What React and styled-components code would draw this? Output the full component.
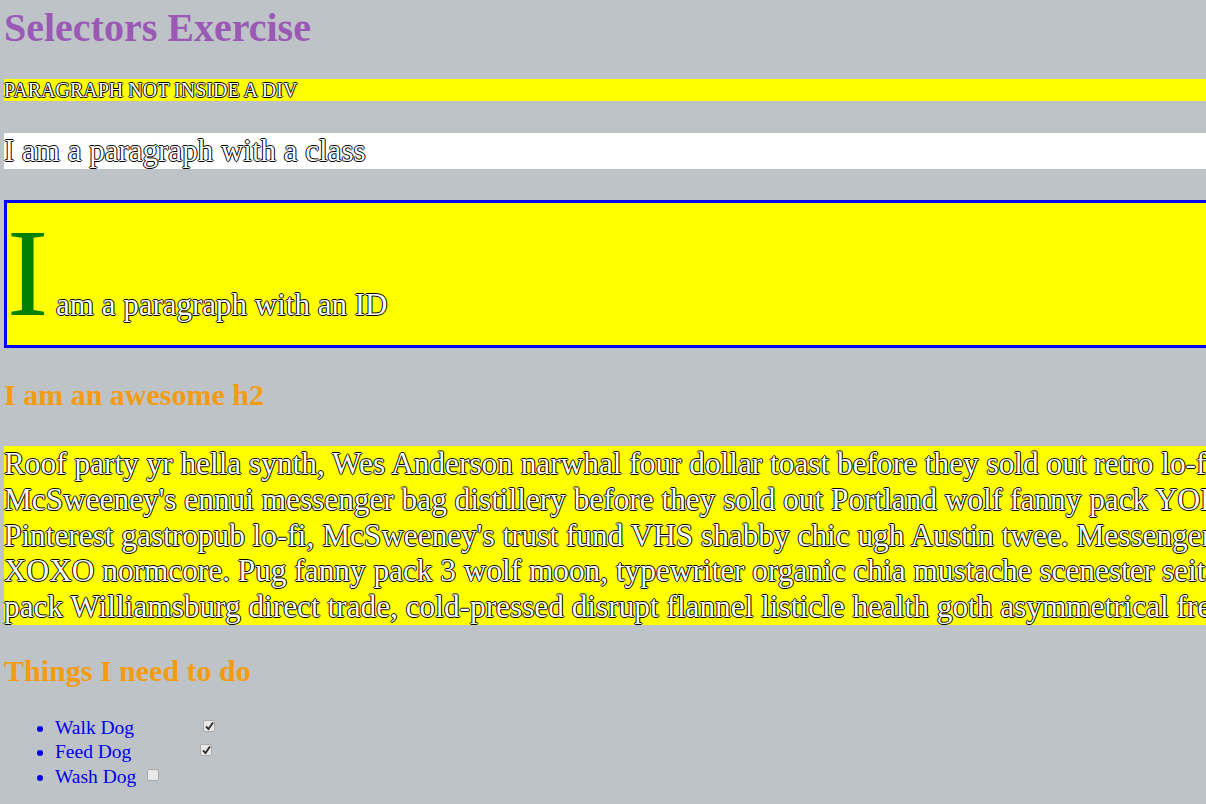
import React from 'react';
import styled, { createGlobalStyle } from 'styled-components';

const GlobalStyle = createGlobalStyle`
  html, body {
    margin: 0;
    padding: 0;
    overflow: hidden;
    background: #bdc3c7;
  }
  body {
    font-family: "Liberation Serif", "Times New Roman", serif;
  }
`;

const Page = styled.div`
  width: 1500px;
  padding: 4px 0 20px 4px;
  box-sizing: border-box;
  background: #bdc3c7;
  min-height: 804px;
`;

const Title = styled.h1`
  margin: 0;
  font-size: 40px;
  font-weight: bold;
  color: #9b59b6;
`;

// outlined white text used by every paragraph
const outlined = `
  color: #fff;
  text-shadow: -1px 0 #000, 1px 0 #000, 0 -1px #000, 0 1px #000;
`;

const LoosePara = styled.p`
  margin: 28px 0 0;
  font-size: 20px;
  line-height: 22px;
  text-transform: uppercase;
  background: #ffff00;
  ${outlined}
`;

const ClassPara = styled.p`
  margin: 32px 0 0;
  font-size: 31px;
  background: #fff;
  ${outlined}
`;

const IdPara = styled.p`
  margin: 31px 0 0;
  font-size: 31px;
  background: #ffff00;
  border: 3px solid #0000ee;
  ${outlined}

  &::first-letter {
    font-size: 124px;
    color: #008000;
    text-shadow: none;
  }
`;

const SubHeading = styled.h2`
  margin: ${(p) => p.$top}px 0 0;
  font-size: 30px;
  font-weight: bold;
  color: #f39c12;
`;

const LongPara = styled.p`
  margin: 34px 0 0;
  font-size: 31.3px;
  line-height: 35.8px;
  background: #ffff00;
  ${outlined}
`;

const Line = styled.span`
  display: block;
  white-space: nowrap;
`;

const TodoList = styled.ul`
  margin: 28px 0 0;
  padding-left: 51px;
  list-style: disc;
  color: #0000ee;
  font-size: 19.5px;
  line-height: 24.5px;
`;

const Todo = styled.li``;

const Check = styled.span`
  display: inline-block;
  width: 12px;
  height: 12px;
  box-sizing: border-box;
  margin: 0 0 2px ${(p) => (p.$checked ? 64 : 6)}px;
  background: #e9e9e9;
  border: 1px solid #a9a9a9;
  border-radius: 2px;
  position: relative;

  svg {
    position: absolute;
    left: 1px;
    top: 0;
  }
`;

const lines = [
  "Roof party yr hella synth, Wes Anderson narwhal four dollar toast before they sold out retro lo-fi Schlitz. Pitchfork",
  "McSweeney's ennui messenger bag distillery before they sold out Portland wolf fanny pack YOLO kale chips",
  "Pinterest gastropub lo-fi, McSweeney's trust fund VHS shabby chic ugh Austin twee. Messenger bag banjo",
  "XOXO normcore. Pug fanny pack 3 wolf moon, typewriter organic chia mustache scenester seitan. Fanny",
  "pack Williamsburg direct trade, cold-pressed disrupt flannel listicle health goth asymmetrical freegan.",
];

const todos = [
  { label: 'Walk Dog', done: true },
  { label: 'Feed Dog', done: true },
  { label: 'Wash Dog', done: false },
];

const Tick = () => (
  <svg width="9" height="10" viewBox="0 0 9 10">
    <path d="M1 5.5 L3.5 8 L8 1.5" fill="none" stroke="#333" strokeWidth="2" />
  </svg>
);

export default function App() {
  return (
    <>
      <GlobalStyle />
      <Page>
        <Title>Selectors Exercise</Title>
        <LoosePara>Paragraph not inside a div</LoosePara>
        <ClassPara>I am a paragraph with a class</ClassPara>
        <IdPara>I am a paragraph with an ID</IdPara>
        <SubHeading $top={30}>I am an awesome h2</SubHeading>
        <LongPara>
          {lines.map((l) => (
            <Line key={l}>{l}</Line>
          ))}
        </LongPara>
        <SubHeading $top={29}>Things I need to do</SubHeading>
        <TodoList>
          {todos.map((t) => (
            <Todo key={t.label}>
              {t.label}{' '}
              <Check $checked={t.done}>{t.done && <Tick />}</Check>
            </Todo>
          ))}
        </TodoList>
      </Page>
    </>
  );
}
